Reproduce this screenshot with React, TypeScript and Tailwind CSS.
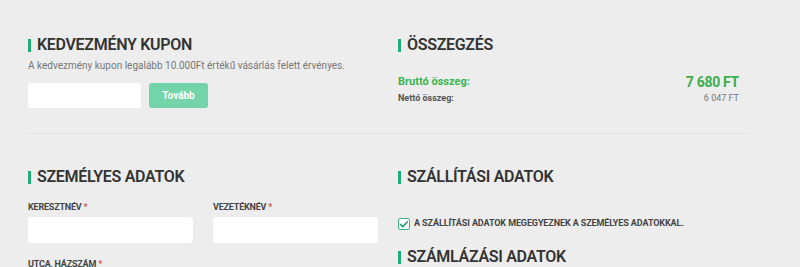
import { Check } from "lucide-react";

function Title({ children }: { children: string }) {
  return (
    <h2 className="flex items-center gap-[6px] h-[16px] text-[16px] font-semibold leading-none text-[#333] tracking-[-0.3px]">
      <span className="w-[3px] h-[13px] bg-[#1fae7a]" />
      {children}
    </h2>
  );
}

function Field({ label }: { label: string }) {
  return (
    <div className="w-[165px]">
      <div className="h-[9px] text-[9px] font-bold uppercase text-[#444] tracking-[-0.2px] leading-none">
        {label} <span className="text-[#d9534f]">*</span>
      </div>
      <div className="mt-[5px] h-[26px] bg-white rounded-[3px]" />
    </div>
  );
}

export default function App() {
  return (
    <div className="w-[800px] h-[267px] overflow-hidden bg-[#ededed] font-['Roboto',sans-serif]">
      <div className="pl-[28px] pr-[52px] pt-[37px]">
        <div className="flex">
          <div className="w-[370px]">
            <Title>KEDVEZMÉNY KUPON</Title>
            <p className="mt-[8px] h-[10px] text-[10px] leading-none text-[#777]">
              A kedvezmény kupon legalább 10.000Ft értékű vásárlás felett érvényes.
            </p>
            <div className="mt-[12px] flex gap-[8px]">
              <div className="w-[113px] h-[25px] bg-white rounded-[3px]" />
              <button className="w-[59px] h-[25px] rounded-[3px] bg-[#72d4a8] text-white text-[10px] font-bold">
                Tovább
              </button>
            </div>
          </div>
          <div className="flex-1">
            <Title>ÖSSZEGZÉS</Title>
            <div className="mt-[21px] pr-[9px]">
              <div className="flex items-center justify-between h-[16px]">
                <span className="text-[11px] font-bold text-[#3cb54c]">Bruttó összeg:</span>
                <span className="text-[14px] font-bold text-[#3cae4a] tracking-[-0.3px]">7 680 FT</span>
              </div>
              <div className="flex items-center justify-between h-[16px] mt-[1px]">
                <span className="text-[9px] font-bold text-[#555]">Nettó összeg:</span>
                <span className="text-[9px] text-[#777]">6 047 FT</span>
              </div>
            </div>
          </div>
        </div>

        <div className="mt-[25px] h-px bg-[#e2e2e2]" />

        <div className="flex mt-[35px]">
          <div className="w-[370px]">
            <Title>SZEMÉLYES ADATOK</Title>
            <div className="mt-[18px] flex gap-[20px]">
              <Field label="Keresztnév" />
              <Field label="Vezetéknév" />
            </div>
            <div className="mt-[17px] text-[9px] font-bold uppercase text-[#444] tracking-[-0.2px] leading-none">
              Utca, házszám <span className="text-[#d9534f]">*</span>
            </div>
          </div>
          <div className="flex-1">
            <Title>SZÁLLÍTÁSI ADATOK</Title>
            <label className="mt-[33px] h-[12px] flex items-center gap-[4px]">
              <span className="w-[12px] h-[12px] rounded-[2px] border border-[#46b38a] bg-white flex items-center justify-center">
                <Check className="w-[11px] h-[11px] text-[#2a9d70]" strokeWidth={4} />
              </span>
              <span className="text-[9px] font-bold uppercase text-[#444] tracking-[-0.1px]">
                A szállítási adatok megegyeznek a személyes adatokkal.
              </span>
            </label>
            <div className="mt-[19px]">
              <Title>SZÁMLÁZÁSI ADATOK</Title>
            </div>
          </div>
        </div>
      </div>
    </div>
  );
}
